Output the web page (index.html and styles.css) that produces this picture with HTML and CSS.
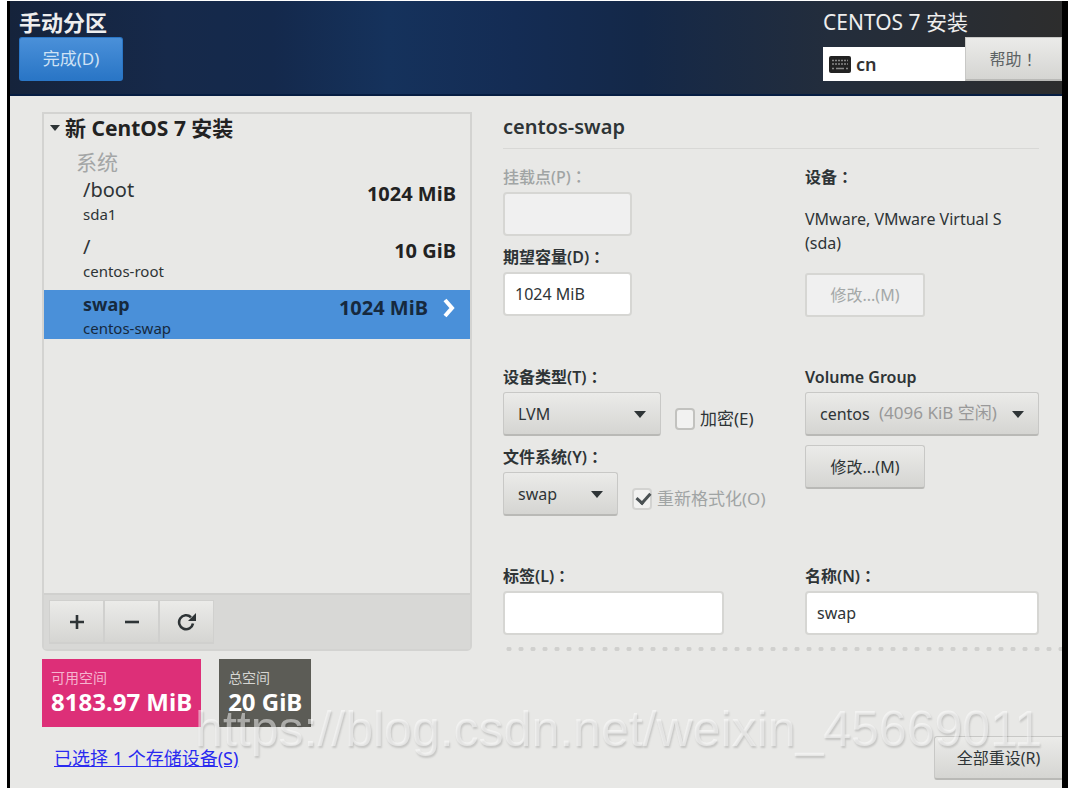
FILE: index.html
```html
<!DOCTYPE html>
<html lang='zh-CN'>
	<head>
		<title>手动分区</title>
		<meta charset='utf-8'>
		<meta name='viewport' content='width=device-width, initial-scale=1'>
		<link rel='stylesheet' href='styles.css'>
	</head>
	<body>
		<div class='screen'>
			<header class='topbar'>
				<div class='topbar-left'>
					<h1>手动分区</h1>
					<button class='btn primary' type='button'>完成(D)</button>
				</div>
				<div class='topbar-right'>
					<p class='product'>CENTOS 7 安装</p>
					<div class='topbar-tools'>
						<button class='keyboard' type='button'>
							<svg width='22' height='17' viewBox='0 0 22 17'>
								<rect x='0' y='0' width='22' height='17' rx='2' fill='#222'/>
								<path d='M3 4.5h16M3 8h16' stroke='#888' stroke-width='1.6' stroke-dasharray='2 1'/>
								<path d='M3 12.5h2M7 12.5h8M17 12.5h2' stroke='#888' stroke-width='1.6'/>
							</svg>
							cn
						</button>
						<button class='btn help' type='button'>帮助<span class='mark' lang='ja'>！</span></button>
					</div>
				</div>
			</header>
			<main>
				<section class='panel'>
					<h2><span class='arrow'></span>新 CentOS 7 安装</h2>
					<h3>系统</h3>
					<ul>
						<li>
							<button class='mount' type='button'>
								<span class='name'>/boot<small>sda1</small></span>
								<b>1024 MiB</b>
							</button>
						</li>
						<li>
							<button class='mount' type='button'>
								<span class='name'>/<small>centos-root</small></span>
								<b>10 GiB</b>
							</button>
						</li>
						<li>
							<button class='mount selected' type='button'>
								<span class='name'>swap<small>centos-swap</small></span>
								<b>1024 MiB</b>
								<svg width='14' height='20' viewBox='0 0 14 20'>
									<path d='M3 2l7 8-7 8' fill='none' stroke='#fff' stroke-width='4'/>
								</svg>
							</button>
						</li>
					</ul>
					<div class='toolbar'>
						<button class='btn' type='button' aria-label='添加'>
							<svg width='14' height='14' viewBox='0 0 14 14'>
								<path d='M7 0v14M0 7h14' stroke='#2e3436' stroke-width='2.6'/>
							</svg>
						</button>
						<button class='btn' type='button' aria-label='删除'>
							<svg width='14' height='14' viewBox='0 0 14 14'>
								<path d='M0 7h14' stroke='#2e3436' stroke-width='2.6'/>
							</svg>
						</button>
						<button class='btn' type='button' aria-label='重新载入'>
							<svg width='20' height='18' viewBox='0 0 20 18'>
								<path d='M14 4.2A7 7 0 1 0 16 10.5' fill='none' stroke='#2e3436' stroke-width='2.6'/>
								<path d='M19 0v8h-8z' fill='#2e3436'/>
							</svg>
						</button>
					</div>
				</section>
				<form class='details'>
					<h2>centos-swap</h2>
					<div class='fields'>
						<div class='stack'>
							<div class='field'>
								<label class='dim' for='mountpoint'>挂载点(P)<span class='mark' lang='ja'>：</span></label>
								<input class='short' id='mountpoint' type='text' disabled>
							</div>
							<div class='field'>
								<label for='capacity'>期望容量(D)<span class='mark' lang='ja'>：</span></label>
								<input class='short' id='capacity' type='text' value='1024 MiB'>
							</div>
						</div>
						<div class='field'>
							<h4>设备<span class='mark' lang='ja'>：</span></h4>
							<p class='device'>VMware, VMware Virtual S (sda)</p>
							<button class='btn modify' type='button' disabled>修改...(M)</button>
						</div>
						<div class='stack'>
							<div class='field'>
								<label for='type'>设备类型(T)<span class='mark' lang='ja'>：</span></label>
								<div class='row'>
									<div class='pick type'>
										<select id='type'>
											<option>LVM</option>
										</select>
									</div>
									<label class='check'><input type='checkbox'>加密(E)</label>
								</div>
							</div>
							<div class='field'>
								<label for='filesystem'>文件系统(Y)<span class='mark' lang='ja'>：</span></label>
								<div class='row'>
									<div class='pick fs'>
										<select id='filesystem'>
											<option>swap</option>
										</select>
									</div>
									<label class='check dim'><input type='checkbox' checked disabled>重新格式化(O)</label>
								</div>
							</div>
						</div>
						<div class='stack'>
							<div class='field'>
								<label for='group'>Volume Group</label>
								<div class='pick'>
									<select id='group'>
										<option>centos</option>
									</select>
									<span class='free'>(4096 KiB 空闲)</span>
								</div>
							</div>
							<button class='btn modify' type='button'>修改...(M)</button>
						</div>
						<div class='field'>
							<label for='label'>标签(L)<span class='mark' lang='ja'>：</span></label>
							<input class='medium' id='label' type='text'>
						</div>
						<div class='field'>
							<label for='name'>名称(N)<span class='mark' lang='ja'>：</span></label>
							<input id='name' type='text' value='swap'>
						</div>
					</div>
				</form>
			</main>
			<footer>
				<div class='totals'>
					<div class='total available'>可用空间<b>8183.97 MiB</b></div>
					<div class='total'>总空间<b>20 GiB</b></div>
				</div>
				<div class='bottom'>
					<a href='#'>已选择 1 个存储设备(S)</a>
					<button class='btn reset' type='button'>全部重设(R)</button>
				</div>
				<div class='watermark'>https://blog.csdn.net/weixin_45669011</div>
			</footer>
		</div>
	</body>
</html>
```
FILE: styles.css
```css
*{
	box-sizing:border-box;
}

body{
	margin:0;
	padding:1px 13px 0 7px;
	background:#fff;
	font:16px/24px "Noto Sans","Noto Sans CJK SC",sans-serif;
	color:#2e3436;
}

h1,h2,h3,h4,p,ul{
	margin:0;
	padding:0;
}

ul{
	list-style:none;
}

button,input,select{
	font:inherit;
	color:inherit;
	margin:0;
}

svg{
	flex:none;
}

/* full-width punctuation centred in its cell */
.mark{
	font-family:"Noto Sans CJK JP",sans-serif;
	line-height:1;
}

.screen{
	min-height:calc(100vh - 1px);
	border:solid #000;
	border-width:0 6px 0 3px;
	background:#e8e8e6;
}

.topbar{
	display:flex;
	justify-content:space-between;
	height:95px;
	padding:6px 0 0 9px;
	border-bottom:2px solid #061d42;
	color:#eee;
	background:
		linear-gradient(90deg,#15233b,#16294a 15%,#14294c 25%,#15325c 36%,#142c54 48%,#142848 60%,#232d3c 78%,#2d2d2d);
}

.topbar-left,.topbar-right{
	display:flex;
	flex-direction:column;
}

.topbar h1{
	font-size:22px;
	line-height:30px;
	font-weight:bold;
}

.topbar-right{
	flex:0 0 239px;
}

.product{
	font-size:21px;
	line-height:30px;
}

.topbar-tools{
	display:flex;
	align-items:flex-end;
}

.keyboard{
	flex:1;
	display:flex;
	align-items:center;
	gap:5px;
	height:34px;
	padding:0 6px;
	border:0;
	background:#fff;
	color:#333;
	font-size:18px;
	font-weight:600;
}

.btn{
	display:flex;
	align-items:center;
	justify-content:center;
	height:44px;
	padding:0 20px;
	border:1px solid #c8c8c6;
	border-bottom:2px solid #b9b9b6;
	border-radius:3px;
	background:linear-gradient(#ebebe9,#d5d5d2);
	color:#2e3436;
}

.btn:disabled{
	background:#f0f0f0;
	border:2px solid #d6d6d3;
	color:#a4a8a8;
}

.primary{
	width:104px;
	border-color:#2a76c6;
	background:linear-gradient(#4a90d9,#2a76c6);
	color:#cfe2f5;
	font-size:17px;
}

.help{
	width:97px;
	padding:0;
	border-radius:0;
	color:#5c6264;
}

main{
	display:grid;
	grid-template-columns:430fr 559fr;
	gap:31px;
	padding:16px 0 0 32px;
}

.panel{
	display:flex;
	flex-direction:column;
	border:2px solid #d3d3d1;
	border-radius:0 0 5px 5px;
}

.panel h2{
	display:flex;
	align-items:center;
	gap:5px;
	padding-left:6px;
	font-size:21px;
	line-height:28px;
	color:#222;
}

.arrow{
	border:5px solid transparent;
	border-top:6px solid #2e3436;
	border-bottom:0;
}

.panel h3{
	padding:6px 0 0 32px;
	font-size:21px;
	line-height:28px;
	font-weight:normal;
	color:#a4a6a6;
}

.panel li{
	margin-bottom:8px;
}

.mount{
	display:flex;
	align-items:flex-start;
	width:100%;
	height:49px;
	padding:2px 14px 0 39px;
	border:0;
	background:none;
	font-size:20px;
	text-align:left;
}

.mount .name{
	flex:1;
}

.mount small{
	display:block;
	font-size:15px;
}

.mount b{
	margin-top:4px;
	color:#222;
}

.mount svg{
	margin-top:6px;
}

.selected{
	background:#4a90d9;
}

.selected .name{
	font-size:18px;
	font-weight:bold;
	color:#16293e;
}

.selected small{
	font-weight:normal;
}

.selected b{
	margin-right:14px;
	color:#16293e;
}

.toolbar{
	display:flex;
	margin-top:auto;
	padding:5px;
	border-top:2px solid #d0d0ce;
	background:#d8d8d6;
}

.toolbar .btn{
	width:55px;
	border-color:#d0d0ce;
	border-radius:0;
}

.details h2{
	margin-right:23px;
	padding-bottom:6px;
	border-bottom:1px solid #d8d8d6;
	font-size:20px;
	line-height:30px;
	font-weight:600;
}

.fields{
	display:grid;
	grid-template-columns:278fr 234fr;
	gap:48px 24px;
	padding:16px 23px 12px 0;
}

/* dotted rule that runs to the edge of the screen */
.details::after{
	content:"";
	display:block;
	height:4px;
	background:radial-gradient(circle,#d0d0ce 2px,transparent 3px) 0 0/12px 4px;
}

.stack{
	display:flex;
	flex-direction:column;
	gap:9px;
}

.field{
	display:flex;
	flex-direction:column;
	gap:3px;
}

.field>label,.field h4{
	font-size:16px;
	font-weight:600;
}

.field>.dim{
	font-weight:500;
}

.dim{
	color:#a0a4a4;
}

input[type=text]{
	width:100%;
	height:44px;
	padding:0 10px;
	border:2px solid #d6d6d3;
	border-radius:4px;
	background:#fff;
}

input[type=text]:disabled{
	background:#f0f0f0;
}

input.short{
	width:129px;
}

input.medium{
	width:221px;
}

.device{
	padding:15px 0;
}

.modify{
	align-self:flex-start;
	width:120px;
	padding:0;
}

.row{
	display:flex;
	gap:14px;
}

.pick{
	position:relative;
}

.pick::after{
	content:"";
	position:absolute;
	right:15px;
	top:19px;
	border:6px solid transparent;
	border-top:7px solid #2e3436;
	border-bottom:0;
	pointer-events:none;
}

.pick select{
	appearance:none;
	display:block;
	width:100%;
	height:44px;
	padding:0 14px;
	border:1px solid #c8c8c6;
	border-bottom:2px solid #b9b9b6;
	border-radius:3px;
	background:linear-gradient(#ebebe9,#d5d5d2);
}

.type{
	width:158px;
}

.fs{
	width:115px;
}

.free{
	position:absolute;
	left:74px;
	top:9px;
	font-size:17px;
	color:#999;
	pointer-events:none;
}

.check{
	display:flex;
	align-items:center;
	gap:5px;
	padding-top:9px;
	font-size:17px;
}

.check input{
	appearance:none;
	width:20px;
	height:22px;
	border:2px solid #c2c2bf;
	border-radius:4px;
	background:#f2f2f1;
}

.check input:disabled{
	border-color:#d3d3d1;
}

.check input:checked::before{
	content:"";
	display:block;
	width:6px;
	height:11px;
	margin:0 0 0 5px;
	border:solid #4b5254;
	border-width:0 3px 3px 0;
	transform:rotate(42deg);
}

footer{
	position:relative;
	padding:8px 0 8px 32px;
}

.totals{
	display:flex;
	gap:18px;
}

.total{
	padding:7px 9px;
	background:#5c5c56;
	color:#d5d5d2;
	font-size:14px;
	height:68px;
}

.total b{
	display:block;
	font-size:24px;
	color:#fff;
}

.available{
	background:#dd2f78;
	color:#f5b4cf;
}

.bottom{
	display:flex;
	align-items:center;
	justify-content:space-between;
	margin-top:9px;
	padding-left:12px;
}

.bottom a{
	font-size:18px;
	color:#2a2af0;
}

.reset{
	width:128px;
	padding:0;
	border-right:0;
	border-radius:3px 0 0 3px;
}

.watermark{
	position:absolute;
	right:20px;
	top:50px;
	font:50px/56px "Liberation Sans",sans-serif;
	color:rgba(255,255,255,.5);
	text-shadow:1px 2px 2px rgba(0,0,0,.15);
	white-space:nowrap;
	pointer-events:none;
}
```
